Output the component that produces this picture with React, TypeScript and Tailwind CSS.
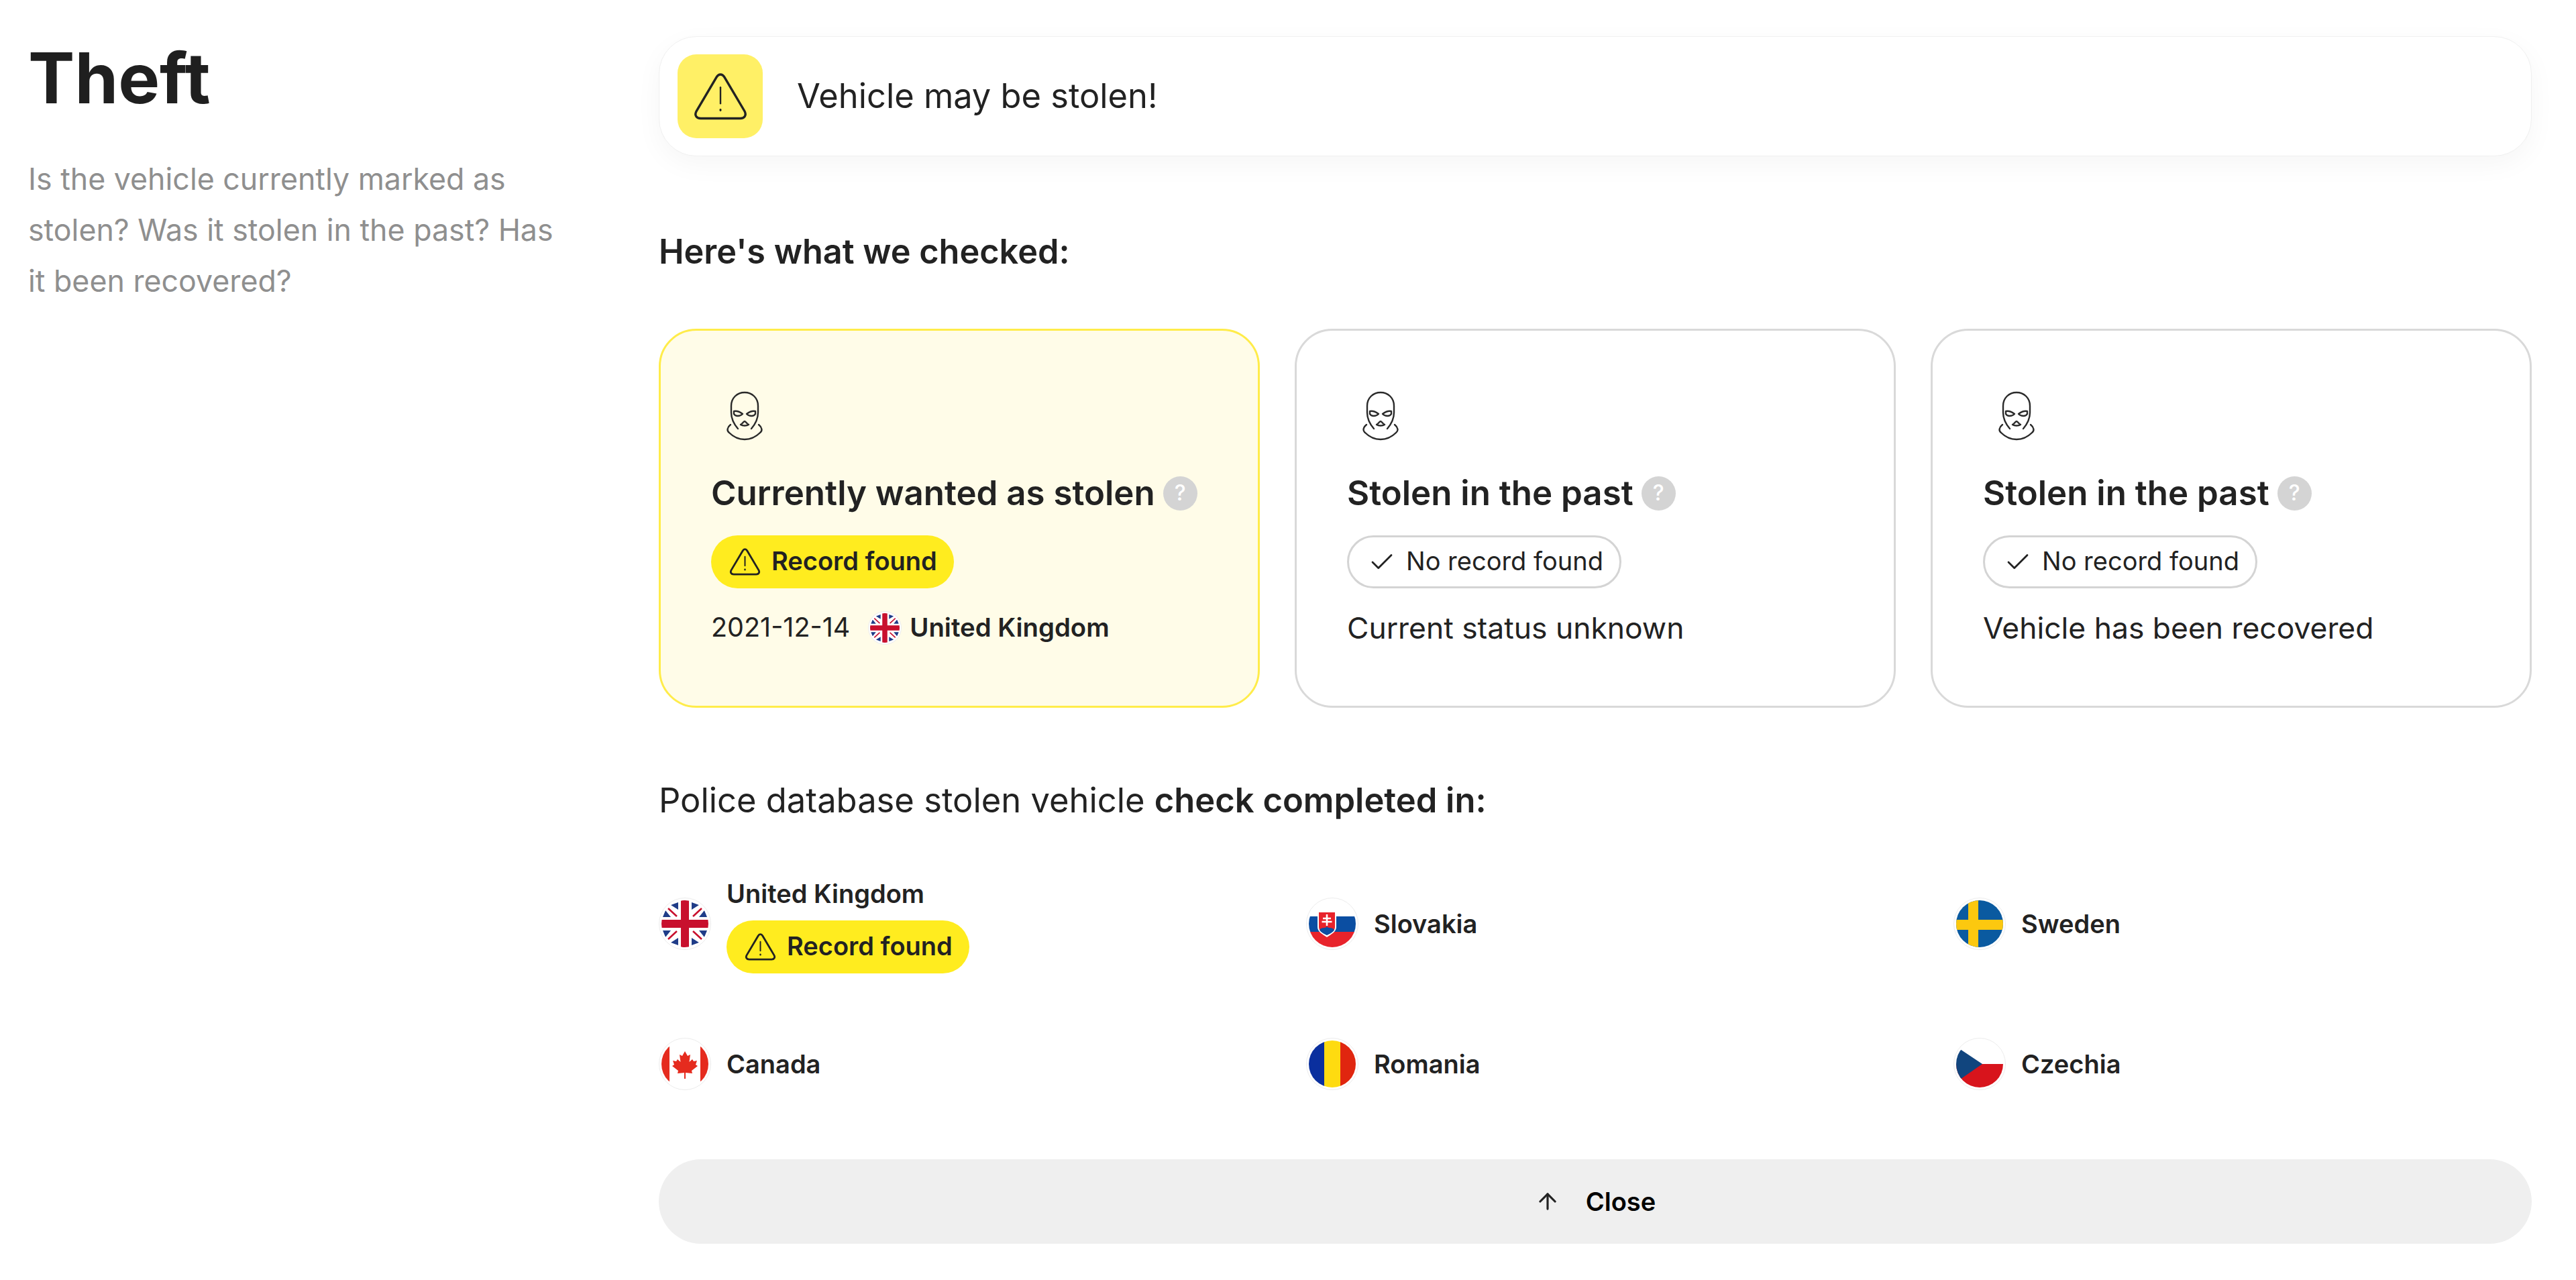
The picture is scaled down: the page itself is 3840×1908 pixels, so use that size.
import React from 'react';
import { ArrowUp, Check } from 'lucide-react';

const WarningIcon = ({ className, stroke = 2.6 }: { className: string; stroke?: number }) => (
  <svg viewBox="0 0 48 42" fill="none" stroke="#222222" strokeWidth={stroke} strokeLinejoin="round" strokeLinecap="round" className={className}>
    <path d="M20.600 4 L3.200 33.400 C1 37.200 3.200 40 6.800 40 H41.200 C44.800 40 47 37.200 44.800 33.400 L27.400 4 C25.600 1 22.400 1 20.600 4 Z" />
    <path d="M24 13 V27" strokeWidth={stroke * 0.7} />
    <path d="M24 32.400 V33" strokeWidth={stroke * 0.85} />
  </svg>
);

const MaskIcon = () => (
  <svg viewBox="0 0 60 74" fill="none" stroke="#2a2a2a" strokeWidth="2.4" strokeLinecap="round" strokeLinejoin="round" className="w-[60px] h-[74px]">
    <path d="M20 56 C14 49 10 41 10 32 V22 C10 10 19 2 30 2 C41 2 50 10 50 22 V32 C50 41 46 49 40 56" />
    <path d="M14 30 C19 29 23 31 27 34 C23 38 16 38 14 34 Z" />
    <path d="M46 30 C41 29 37 31 33 34 C37 38 44 38 46 34 Z" />
    <path d="M24 50 C27 49 28 45 30 45 C32 45 33 49 36 50 C33 52 27 52 24 50 Z" />
    <path d="M9 50 C4 54 3 59 7 62 C13 68 22 72 30 72 C38 72 47 68 53 62 C57 59 56 54 51 50" />
  </svg>
);

const FlagCircle = ({ size = 'lg', children }: { size?: 'lg' | 'sm'; children: React.ReactNode }) => (
  <div className={`${size === 'lg' ? 'w-[78px] h-[78px] p-[3px]' : 'w-[50px] h-[50px] p-[2px]'} shrink-0 rounded-full bg-white border border-[#ececec]`}>
    <svg viewBox="0 0 70 70" className="w-full h-full rounded-full block">
      {children}
    </svg>
  </div>
);

const UkFlag = () => (
  <>
    <rect width="70" height="70" fill="#ffffff" />
    <path d="M25 3 L25 14 L14 7 Z M2 25 L14 25 L6 15 Z M45 3 L45 14 L56 7 Z M68 25 L56 25 L64 15 Z M25 67 L25 56 L14 63 Z M2 45 L14 45 L6 55 Z M45 67 L45 56 L56 63 Z M68 45 L56 45 L64 55 Z" fill="#1f3c88" />
    <path d="M10 12 L23 24 M60 12 L47 24 M10 58 L23 46 M60 58 L47 46" stroke="#c8102e" strokeWidth="2.6" />
    <rect x="29" width="12" height="70" fill="#c8102e" />
    <rect y="29" width="70" height="12" fill="#c8102e" />
  </>
);

const SlovakiaFlag = () => (
  <>
    <rect width="70" height="70" fill="#ffffff" />
    <rect y="24" width="70" height="23" fill="#0b4ea2" />
    <rect y="47" width="70" height="23" fill="#e8232b" />
    <path d="M13 17 H41 V40 C41 47 33 51 27 55 C21 51 13 47 13 40 Z" fill="#ffffff" />
    <path d="M15 18 H39 V40 C39 46 32 49 27 52 C22 49 15 46 15 40 Z" fill="#e8232b" />
    <path d="M27 21 V38 M21 27 H33 M19.500 32 H34.500" stroke="#ffffff" strokeWidth="2.6" />
    <path d="M16 44 C20 39 24 43 27 39 C30 43 34 39 38 44 C36 48 31 50 27 52 C23 50 18 48 16 44 Z" fill="#0b4ea2" />
  </>
);

const SwedenFlag = () => (
  <>
    <rect width="70" height="70" fill="#0a5aa0" />
    <rect x="18" width="15" height="70" fill="#fcc80f" />
    <rect y="29" width="70" height="15" fill="#fcc80f" />
  </>
);

const CanadaFlag = () => (
  <>
    <rect width="70" height="70" fill="#ffffff" />
    <rect width="12" height="70" fill="#e52b1e" />
    <rect x="58" width="12" height="70" fill="#e52b1e" />
    <path d="M35 16 L39 23 L43 21 L41.500 32 L46 28 L48 31 L53 30 L51 36 L54 38 L45 45 L46 49 L36 48 V57 H34 V48 L24 49 L25 45 L16 38 L19 36 L17 30 L22 31 L24 28 L28.500 32 L27 21 L31 23 Z" fill="#e52b1e" />
  </>
);

const RomaniaFlag = () => (
  <>
    <rect width="24" height="70" fill="#0a2f9e" />
    <rect x="23" width="24" height="70" fill="#fedb10" />
    <rect x="47" width="23" height="70" fill="#e0260f" />
  </>
);

const CzechiaFlag = () => (
  <>
    <rect width="70" height="70" fill="#ffffff" />
    <rect y="35" width="70" height="35" fill="#d8141c" />
    <path d="M0 9 L39 35 L0 62 Z" fill="#11457e" />
  </>
);

const HelpDot = () => (
  <span className="w-[51px] h-[51px] shrink-0 rounded-full bg-[#d4d4d4] text-white text-[32px] leading-none font-medium flex items-center justify-center">?</span>
);

const RecordFound = () => (
  <div className="w-[362px] h-[79px] rounded-full bg-[#ffec1f] flex items-center pl-[27px] gap-[16px]">
    <WarningIcon className="w-[47px] h-[41px]" stroke={2.9} />
    <span className="text-[38px] leading-none font-semibold text-[#222222] -translate-y-[2px]">Record found</span>
  </div>
);

const NoRecord = () => (
  <div className="w-[409px] h-[79px] rounded-full bg-white border-[3px] border-[#d4d4d4] flex items-center pl-[28px] gap-[15px]">
    <Check size={42} strokeWidth={1.6} className="text-[#222222]" />
    <span className="text-[38px] leading-none font-normal text-[#222222] -translate-y-[2px]">No record found</span>
  </div>
);

const CheckCard = ({ title, yellow, children }: { title: string; yellow?: boolean; children: React.ReactNode }) => (
  <div className={`h-[565px] rounded-[56px] border-[3px] pl-[75px] pt-[90px] ${yellow ? 'bg-[#fffce8] border-[#ffec4a]' : 'bg-white border-[#d9d9d9]'}`}>
    <div className="pl-[20px]">
      <MaskIcon />
    </div>
    <div className="mt-[48px] flex items-center gap-[12px] h-[60px]">
      <span className="text-[51px] leading-[60px] font-semibold text-[#222222]">{title}</span>
      <HelpDot />
    </div>
    {children}
  </div>
);

const Country = ({ name, flag, children }: { name: string; flag: React.ReactNode; children?: React.ReactNode }) => (
  <div className="flex items-center gap-[23px]">
    <FlagCircle>{flag}</FlagCircle>
    <div className="flex flex-col gap-[10px]">
      <span className="text-[38px] leading-[60px] font-semibold text-[#222222]">{name}</span>
      {children}
    </div>
  </div>
);

export default function App() {
  return (
    <div className="w-[3840px] h-[1908px] bg-white flex pt-[54px] text-[#222222] font-['Inter',sans-serif] overflow-hidden">
      <aside className="w-[982px] shrink-0 pl-[42px]">
        <h1 className="text-[104px] leading-[124px] font-bold text-[#1f1f1f]">Theft</h1>
        <p className="mt-[51px] w-[800px] text-[44.7px] leading-[76px] text-[#8f8f8f]">
          Is the vehicle currently marked as stolen? Was it stolen in the past? Has it been recovered?
        </p>
      </aside>

      <main className="w-[2792px] shrink-0">
        <div className="h-[179px] rounded-[56px] bg-white border border-[#f0f0f0] shadow-[0_12px_40px_rgba(0,0,0,0.04)] flex items-center pl-[27px] gap-[51px]">
          <div className="w-[127px] h-[125px] rounded-[28px] bg-[#fff066] flex items-center justify-center">
            <WarningIcon className="w-[84px] h-[72px]" stroke={2} />
          </div>
          <span className="text-[50.6px] leading-none text-[#222222]">Vehicle may be stolen!</span>
        </div>

        <h2 className="mt-[112px] text-[50.4px] leading-[60px] font-semibold">Here's what we checked:</h2>

        <div className="mt-[85px] grid grid-cols-3 gap-[52px]">
          <CheckCard title="Currently wanted as stolen" yellow>
            <div className="mt-[33px]"><RecordFound /></div>
            <div className="mt-[29px] h-[60px] flex items-center">
              <span className="text-[39.5px]">2021-12-14</span>
              <div className="ml-[27px] mr-[12px]">
                <FlagCircle size="sm"><UkFlag /></FlagCircle>
              </div>
              <span className="text-[38.3px] font-semibold">United Kingdom</span>
            </div>
          </CheckCard>
          <CheckCard title="Stolen in the past">
            <div className="mt-[33px]"><NoRecord /></div>
            <p className="mt-[29px] text-[44.4px] leading-[60px]">Current status unknown</p>
          </CheckCard>
          <CheckCard title="Stolen in the past">
            <div className="mt-[33px]"><NoRecord /></div>
            <p className="mt-[29px] text-[44.4px] leading-[60px]">Vehicle has been recovered</p>
          </CheckCard>
        </div>

        <p className="mt-[108px] text-[50.7px] leading-[60px]">
          Police database stolen vehicle <span className="font-semibold">check completed in:</span>
        </p>

        <div className="mt-[79px] grid grid-cols-3 gap-x-[103px] gap-y-[96px] items-center">
          <Country name="United Kingdom" flag={<UkFlag />}>
            <RecordFound />
          </Country>
          <Country name="Slovakia" flag={<SlovakiaFlag />} />
          <Country name="Sweden" flag={<SwedenFlag />} />
          <Country name="Canada" flag={<CanadaFlag />} />
          <Country name="Romania" flag={<RomaniaFlag />} />
          <Country name="Czechia" flag={<CzechiaFlag />} />
        </div>

        <button className="mt-[103px] w-full h-[126px] rounded-full bg-[#efefef] flex items-center justify-center gap-[38px]">
          <ArrowUp size={38} strokeWidth={2} className="text-[#222222]" />
          <span className="text-[38px] font-semibold text-black">Close</span>
        </button>
      </main>
    </div>
  );
}
